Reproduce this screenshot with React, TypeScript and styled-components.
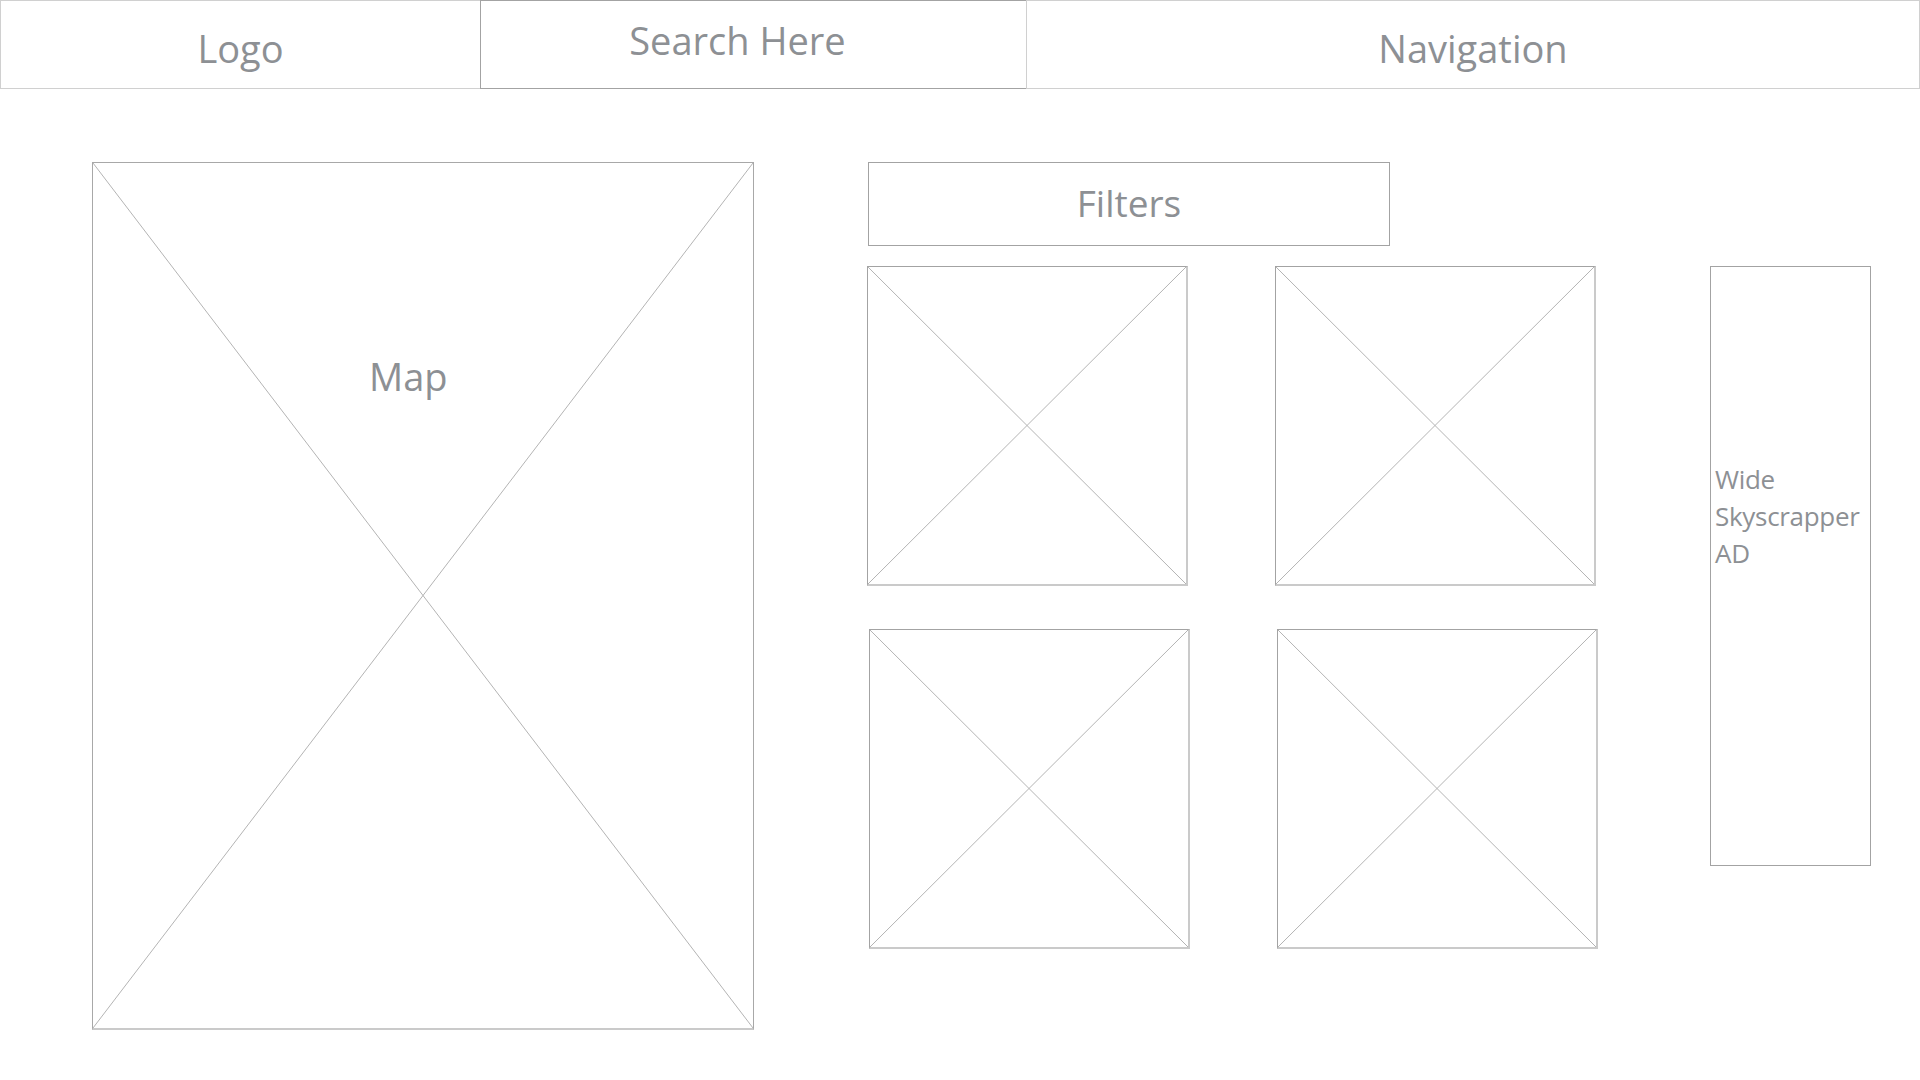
import React from 'react'
import styled, { createGlobalStyle } from 'styled-components'

const GlobalStyle = createGlobalStyle`
	html, body {
		margin: 0;
		padding: 0;
		background: #ffffff;
	}
	body {
		font-family: 'Open Sans', 'Noto Sans', sans-serif;
		color: #8d9094;
	}
`

const Cross = () => (
	<CrossSvg viewBox="0 0 100 100" preserveAspectRatio="none">
		<line x1="0" y1="0" x2="100" y2="100" vectorEffect="non-scaling-stroke" />
		<line x1="100" y1="0" x2="0" y2="100" vectorEffect="non-scaling-stroke" />
	</CrossSvg>
)

function App() {
	return (
		<Page>
			<GlobalStyle />
			<Header>
				<HeaderCell width="481px" top={28}>
					Logo
				</HeaderCell>
				<HeaderCell width="547px" top={20} offset={-32} dark>
					Search Here
				</HeaderCell>
				<HeaderCell top={28} grow>
					Navigation
				</HeaderCell>
			</Header>
			<Main>
				<MapBox>
					<Cross />
					<MapLabel>Map</MapLabel>
				</MapBox>
				<Listing>
					<Filters>Filters</Filters>
					<TileRow>
						<Tile>
							<Cross />
						</Tile>
						<Tile>
							<Cross />
						</Tile>
					</TileRow>
					<TileRow shift>
						<Tile>
							<Cross />
						</Tile>
						<Tile>
							<Cross />
						</Tile>
					</TileRow>
				</Listing>
				<AdBox>
					Wide
					<br />
					Skyscrapper
					<br />
					AD
				</AdBox>
			</Main>
		</Page>
	)
}

const Page = styled.div`
	width: 1920px;
	height: 1080px;
	overflow: hidden;
`

const Header = styled.div`
	display: flex;
	height: 89px;
`

const HeaderCell = styled('div')<{ width?: string; top: number; offset?: number; dark?: boolean; grow?: boolean }>`
	box-sizing: border-box;
	width: ${(p) => p.width || 'auto'};
	flex: ${(p) => (p.grow ? 1 : 'none')};
	height: 89px;
	border: 1px solid ${(p) => (p.dark ? '#a3a3a3' : '#d0d0d0')};
	margin-left: -1px;
	padding-top: ${(p) => p.top}px;
	padding-right: ${(p) => (p.offset ? -p.offset : 0)}px;
	text-align: center;
	font-size: 38px;
	line-height: 1;
	&:first-child {
		margin-left: 0;
	}
`

const Main = styled.div`
	display: flex;
	align-items: flex-start;
	padding: 73px 0 0 92px;
`

const CrossSvg = styled.svg`
	position: absolute;
	inset: 0;
	width: 100%;
	height: 100%;
	stroke: #b4b4b4;
	stroke-width: 1;
	fill: none;
`

const MapBox = styled.div`
	position: relative;
	box-sizing: border-box;
	width: 662px;
	height: 868px;
	border: 1px solid #a8a8a8;
	border-bottom: 2px solid #cacaca;
`

const MapLabel = styled.div`
	position: relative;
	padding: 194px 0 0 276px;
	font-size: 38px;
	line-height: 1;
`

const Listing = styled.div`
	display: flex;
	flex-direction: column;
	margin-left: 113px;
	gap: 20px;
`

const Filters = styled.div`
	box-sizing: border-box;
	width: 522px;
	height: 84px;
	margin-left: 1px;
	border: 1px solid #a3a3a3;
	padding-top: 21px;
	text-align: center;
	font-size: 37px;
	line-height: 1;
`

const TileRow = styled('div')<{ shift?: boolean }>`
	display: flex;
	gap: 87px;
	padding-left: ${(p) => (p.shift ? '2px' : '0')};
	& + & {
		margin-top: 23px;
	}
`

const Tile = styled.div`
	position: relative;
	box-sizing: border-box;
	width: 321px;
	height: 320px;
	border-style: solid;
	border-width: 1px 2px 2px 1px;
	border-color: #a3a3a3 #cacaca #cacaca #a3a3a3;
`

const AdBox = styled.div`
	box-sizing: border-box;
	width: 161px;
	height: 600px;
	margin: 104px 0 0 112px;
	border: 1px solid #a3a3a3;
	padding: 194px 0 0 4px;
	font-size: 26px;
	line-height: 37px;
	letter-spacing: -0.3px;
`

export default App
